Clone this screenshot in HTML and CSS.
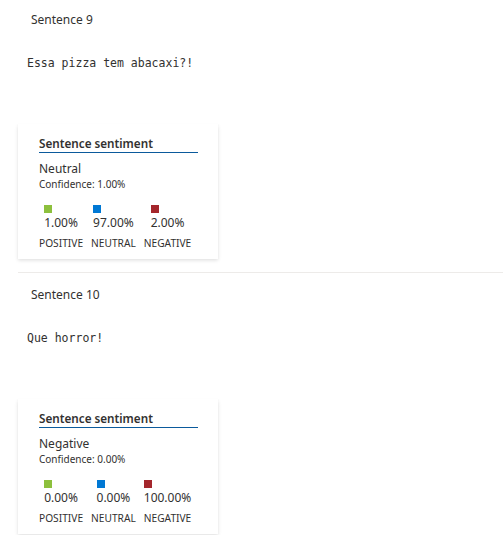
FILE: index.html
```html
<!DOCTYPE html>
<html>
<head>
<meta charset="utf-8">
<link rel="stylesheet" href="styles.css">
</head>
<body>
<div class="list">
  <section class="sentence">
    <div class="sentence-label">Sentence 9</div>
    <pre class="sentence-text">Essa pizza tem abacaxi?!</pre>
    <div class="card">
      <div class="card-title">Sentence sentiment</div>
      <div class="overall">Neutral</div>
      <div class="confidence">Confidence: 1.00%</div>
      <div class="scores">
        <div class="score">
          <div class="score-main"><span class="swatch pos"></span><span class="value">1.00%</span></div>
          <div class="score-label">POSITIVE</div>
        </div>
        <div class="score">
          <div class="score-main"><span class="swatch neu"></span><span class="value">97.00%</span></div>
          <div class="score-label">NEUTRAL</div>
        </div>
        <div class="score">
          <div class="score-main"><span class="swatch neg"></span><span class="value">2.00%</span></div>
          <div class="score-label">NEGATIVE</div>
        </div>
      </div>
    </div>
  </section>
  <section class="sentence">
    <div class="sentence-label">Sentence 10</div>
    <pre class="sentence-text">Que horror!</pre>
    <div class="card">
      <div class="card-title">Sentence sentiment</div>
      <div class="overall">Negative</div>
      <div class="confidence">Confidence: 0.00%</div>
      <div class="scores">
        <div class="score">
          <div class="score-main"><span class="swatch pos"></span><span class="value">0.00%</span></div>
          <div class="score-label">POSITIVE</div>
        </div>
        <div class="score">
          <div class="score-main"><span class="swatch neu"></span><span class="value">0.00%</span></div>
          <div class="score-label">NEUTRAL</div>
        </div>
        <div class="score">
          <div class="score-main"><span class="swatch neg"></span><span class="value">100.00%</span></div>
          <div class="score-label">NEGATIVE</div>
        </div>
      </div>
    </div>
  </section>
</div>
</body>
</html>
```
FILE: styles.css
```css
html, body {
  margin: 0;
  padding: 0;
  background: #ffffff;
}
body {
  font-family: "Segoe UI", "Noto Sans", "Open Sans", sans-serif;
  color: #323130;
  overflow: hidden;
}
.list {
  padding-left: 18px;
}
.sentence {
  padding-top: 11px;
  padding-bottom: 13px;
}
.sentence + .sentence {
  border-top: 1px solid #edebe9;
  padding-top: 13px;
}
.sentence-label {
  font-size: 12px;
  line-height: 18px;
  padding-left: 13px;
}
.sentence-text {
  font-family: "DejaVu Sans Mono", "Liberation Mono", monospace;
  font-size: 11.5px;
  line-height: 16px;
  margin: 26px 0 53px 9px;
  color: #323130;
}
.card {
  width: 200px;
  box-sizing: border-box;
  padding: 12px 21px 9px;
  background: #fff;
  box-shadow: 0 1.6px 3.6px rgba(0,0,0,0.13), 0 0.3px 0.9px rgba(0,0,0,0.11);
}
.card-title {
  font-size: 11.7px;
  font-weight: 600;
  line-height: 15px;
  padding-bottom: 1px;
  border-bottom: 1px solid #0b5a9c;
  margin-right: -1px;
}
.overall {
  font-size: 12px;
  line-height: 17px;
  margin-top: 7px;
}
.confidence {
  font-size: 10px;
  line-height: 14px;
}
.scores {
  display: flex;
  gap: 8px;
  margin-top: 14px;
}
.score {
  display: flex;
  flex-direction: column;
  align-items: center;
}
.score-main {
  display: flex;
  flex-direction: column;
  align-items: flex-start;
}
.swatch {
  width: 8px;
  height: 8px;
  display: block;
}
.swatch.pos { background: #8dc03d; }
.swatch.neu { background: #0078d4; }
.swatch.neg { background: #a4262c; }
.value {
  font-size: 12px;
  line-height: 17px;
  margin-top: 1px;
}
.score-label {
  font-size: 10.2px;
  line-height: 14px;
  margin-top: 5px;
}
```
